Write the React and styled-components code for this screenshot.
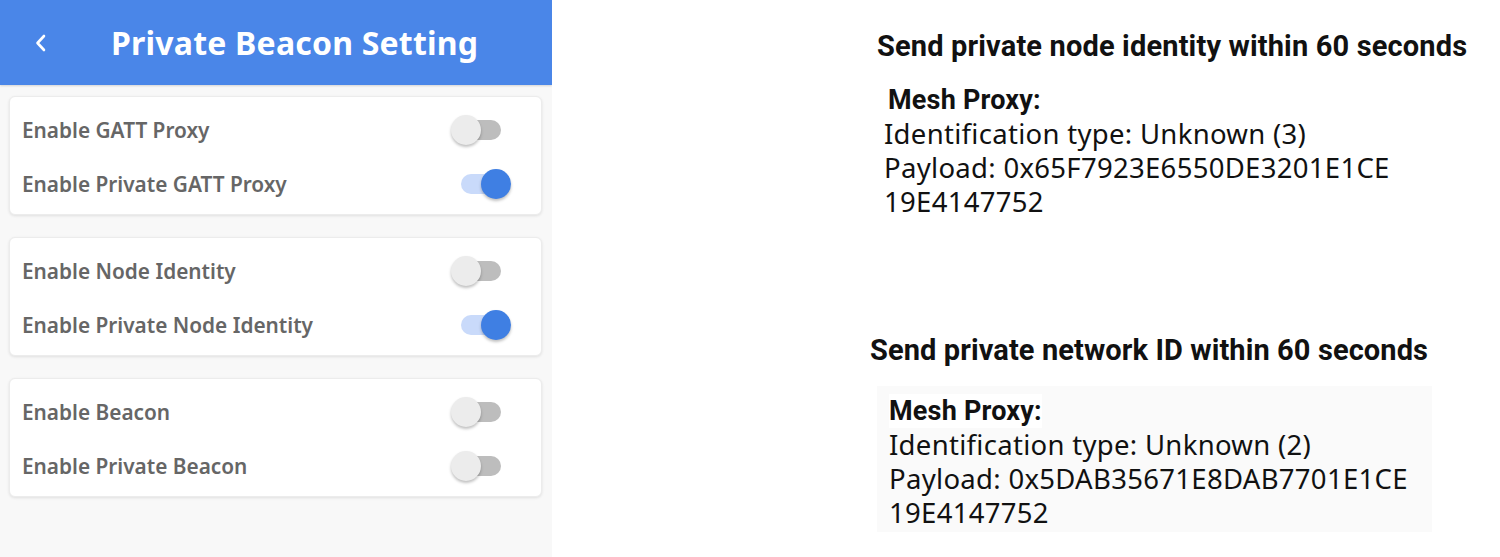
import React from 'react'
import styled, { createGlobalStyle } from 'styled-components'

const Global = createGlobalStyle`
  html, body { margin: 0; padding: 0; background: #fff; }
  * { box-sizing: border-box; }
`

const Page = styled.div`
  width: 1500px;
  height: 557px;
  display: flex;
  overflow: hidden;
`

const Phone = styled.div`
  width: 552px;
  height: 100%;
  background: #f8f8f8;
  display: flex;
  flex-direction: column;
`

const Header = styled.div`
  height: 85px;
  background: #4a86e8;
  display: flex;
  align-items: center;
  padding-left: 34px;
  gap: 63px;
  box-shadow: 0 1px 2px rgba(0,0,0,0.15);
`

const Title = styled.h1`
  margin: 0;
  color: #fff;
  font-family: "Noto Sans", sans-serif;
  font-weight: 700;
  font-size: 32px;
  letter-spacing: 0.2px;
`

const List = styled.div`
  display: flex;
  flex-direction: column;
  gap: 22px;
  padding: 11px 10px 0 9px;
`

const Card = styled.div`
  background: #fff;
  border-radius: 6px;
  border: 1px solid #ececec;
  box-shadow: 0 1px 3px rgba(0,0,0,0.10);
  padding: 6px 0 3px;
`

const Row = styled.div`
  height: 54px;
  display: flex;
  align-items: center;
  justify-content: space-between;
  padding: 0 40px 0 12px;
`

const Label = styled.span`
  font-family: "Noto Sans", sans-serif;
  font-weight: 600;
  font-size: 20.8px;
  color: #666;
`

const Track = styled.div`
  position: relative;
  width: 40px;
  height: 20px;
  border-radius: 10px;
  background: ${({ on }) => (on ? '#c9dafa' : '#bdbdbd')};
`

const Thumb = styled.div`
  position: absolute;
  top: -5px;
  left: ${({ on }) => (on ? '20px' : '-10px')};
  width: 30px;
  height: 30px;
  border-radius: 50%;
  background: ${({ on }) => (on ? '#3f7fe3' : '#ececec')};
  box-shadow: 0 2px 3px rgba(0,0,0,0.25);
`

const Switch = ({ on }) => (
  <Track on={on ? 1 : 0}>
    <Thumb on={on ? 1 : 0} />
  </Track>
)

const Side = styled.div`
  flex: 1;
  background: #fff;
  padding: 26px 0 0 318px;
  display: flex;
  flex-direction: column;
`

const Section = styled.div`
  margin-left: ${({ indent }) => indent}px;
  margin-top: ${({ top }) => top || 0}px;
`

const Heading = styled.div`
  font-family: "Roboto", sans-serif;
  font-weight: 700;
  font-size: 29px;
  line-height: 40px;
  color: #111;
  letter-spacing: ${({ ls }) => ls}px;
`

const Box = styled.div`
  margin-top: ${({ top }) => top}px;
  margin-left: ${({ indent }) => indent || 0}px;
  width: ${({ w }) => (w ? `${w}px` : 'auto')};
  padding: ${({ pad }) => pad || '0'};
  background: ${({ shaded }) => (shaded ? '#fafafa' : 'transparent')};
`

const ProxyLabel = styled.div`
  display: inline-block;
  margin-left: ${({ indent }) => indent || 0}px;
  font-family: "Roboto", sans-serif;
  font-weight: 700;
  font-size: 27px;
  line-height: 34px;
  color: #111;
  letter-spacing: 0.2px;
  background: #fff;
`

const Line = styled.div`
  font-family: "Noto Sans", sans-serif;
  font-weight: 400;
  font-size: 27.5px;
  letter-spacing: 0.3px;
  line-height: 34px;
  color: #111;
`

const Back = () => (
  <svg width="14" height="18" viewBox="0 0 14 18" fill="none">
    <path d="M10 2 L3.5 9 L10 16" stroke="#fff" strokeWidth="2.6" strokeLinecap="round" strokeLinejoin="round" />
  </svg>
)

const rows = [
  [['Enable GATT Proxy', false], ['Enable Private GATT Proxy', true]],
  [['Enable Node Identity', false], ['Enable Private Node Identity', true]],
  [['Enable Beacon', false], ['Enable Private Beacon', false]],
]

export default function App() {
  return (
    <Page>
      <Global />
      <Phone>
        <Header>
          <Back />
          <Title>Private Beacon Setting</Title>
        </Header>
        <List>
          {rows.map((card, i) => (
            <Card key={i}>
              {card.map(([label, on]) => (
                <Row key={label}>
                  <Label>{label}</Label>
                  <Switch on={on} />
                </Row>
              ))}
            </Card>
          ))}
        </List>
      </Phone>
      <Side>
        <Section indent={7}>
          <Heading ls={0.15}>Send private node identity within 60 seconds</Heading>
          <Box top={17} indent={7}>
            <ProxyLabel indent={4}>Mesh Proxy:</ProxyLabel>
            <Line>Identification type: Unknown (3)</Line>
            <Line>Payload: 0x65F7923E6550DE3201E1CE</Line>
            <Line>19E4147752</Line>
          </Box>
        </Section>
        <Section indent={0} top={111}>
          <Heading ls={0.1}>Send private network ID within 60 seconds</Heading>
          <Box top={16} indent={7} w={555} pad="8px 0 2px 12px" shaded>
            <ProxyLabel>Mesh Proxy:</ProxyLabel>
            <Line>Identification type: Unknown (2)</Line>
            <Line>Payload: 0x5DAB35671E8DAB7701E1CE</Line>
            <Line>19E4147752</Line>
          </Box>
        </Section>
      </Side>
    </Page>
  )
}
